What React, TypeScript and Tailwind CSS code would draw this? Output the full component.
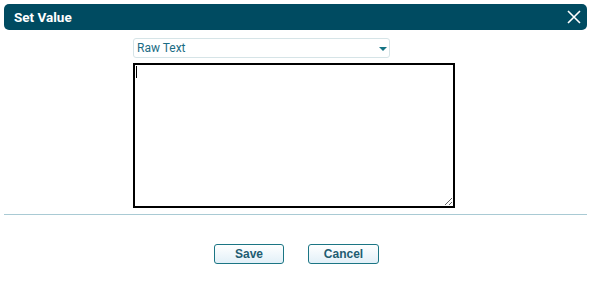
import { useState } from 'react'

const options = ['Raw Text', 'Expression', 'Variable']

export default function App() {
  const [mode, setMode] = useState(0)
  const [value, setValue] = useState('')

  return (
    <div className="w-[591px] h-[284px] bg-white p-1 font-['Roboto',sans-serif]">
      {/* Title bar */}
      <div className="h-[26px] rounded-[5px] bg-[#004b61] flex items-center justify-between pl-[10px] pr-[5px]">
        <span className="text-[13.5px] font-bold text-white">Set Value</span>
        <button className="w-4 h-4 flex items-center justify-center text-white">
          <svg width="14" height="14" viewBox="0 0 14 14" fill="none" stroke="currentColor" strokeWidth="1.6">
            <path d="M1 1 L13 13 M13 1 L1 13" />
          </svg>
        </button>
      </div>

      <div className="pl-[129px] pt-2">
        {/* Mode picker */}
        <button
          onClick={() => setMode((mode + 1) % options.length)}
          className="w-[257px] h-5 flex items-center justify-between border border-[#d6e4e7] rounded-[3px] bg-white pl-[3px] pr-[2px] text-[12px] leading-none text-[#1b6c84]"
        >
          <span>{options[mode]}</span>
          <svg width="8" height="4" viewBox="0 0 8 4" className="mt-px">
            <path d="M0 0 H8 L4 4 Z" fill="#147383" />
          </svg>
        </button>

        {/* Value */}
        <div className="relative mt-[5px] w-[322px]">
          <textarea
            value={value}
            onChange={(e) => setValue(e.target.value)}
            className="block w-[322px] h-[145px] border-2 border-black bg-white outline-none px-[1px] py-0 text-[12px] caret-black"
          />
          {value === '' && (
            <span className="absolute left-[3px] top-[3px] w-px h-[12px] bg-black pointer-events-none" />
          )}
        </div>
      </div>

      <div className="mt-[6px] h-px bg-[#a9cad4]" />

      {/* Actions */}
      <div className="mt-[29px] pl-[2px] flex justify-center gap-6 font-['Liberation_Sans',sans-serif]">
        <button className="w-[70px] h-5 border border-[#1b7584] rounded-[3px] bg-gradient-to-b from-white to-[#e2f0f8] text-[12px] font-bold text-[#1f5d71]">
          Save
        </button>
        <button className="w-[71px] h-5 border border-[#1b7584] rounded-[3px] bg-gradient-to-b from-white to-[#e2f0f8] text-[12px] font-bold text-[#1f5d71]">
          Cancel
        </button>
      </div>
    </div>
  )
}
